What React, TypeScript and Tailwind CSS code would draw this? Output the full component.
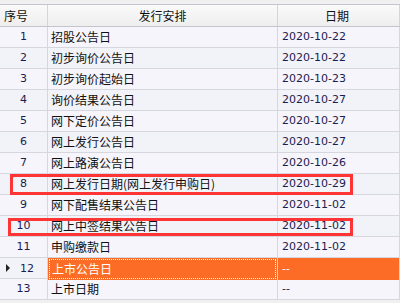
import React from "react";

const rows: [string, string][] = [
  ["招股公告日", "2020-10-22"],
  ["初步询价公告日", "2020-10-22"],
  ["初步询价起始日", "2020-10-23"],
  ["询价结果公告日", "2020-10-27"],
  ["网下定价公告日", "2020-10-27"],
  ["网上发行公告日", "2020-10-27"],
  ["网上路演公告日", "2020-10-26"],
  ["网上发行日期(网上发行申购日)", "2020-10-29"],
  ["网下配售结果公告日", "2020-11-02"],
  ["网上中签结果公告日", "2020-11-02"],
  ["申购缴款日", "2020-11-02"],
  ["上市公告日", "--"],
  ["上市日期", "--"],
];

const cjk = { fontFamily: '"Noto Sans CJK SC", "Noto Sans", sans-serif' };
const num = { fontFamily: '"DejaVu Sans", "Noto Sans CJK SC", sans-serif' };

export default function App() {
  return (
    <div className="relative w-[400px] h-[303px] bg-[#f0f0f0] overflow-hidden">
      <div className="h-[5px] bg-[#f0f0f0] border-b border-[#c4c4cc]" />
      <div className="grid grid-cols-[48px_230px_122px] h-[22px] border-b border-[#c4c4cc] bg-gradient-to-b from-[#fafafa] to-[#eeeeee] text-[12px] text-[#111]" style={cjk}>
        <div className="border-r border-[#d4d4dc] flex items-center pl-[4px]">序号</div>
        <div className="border-r border-[#d4d4dc] flex items-center justify-center">发行安排</div>
        <div className="border-r border-[#d4d4dc] flex items-center justify-center pr-[3px]">日期</div>
      </div>
      {rows.map(([name, date], i) => {
        const sel = i === 11;
        const bg = i % 2 === 0 ? "bg-[#f6f5fc]" : "bg-[#f1f3f9]";
        return (
          <div key={i} className={`grid grid-cols-[48px_230px_122px] h-[21px] border-b border-[#d6d6de] ${bg}`}>
            <div className="relative border-r border-[#d6d6de] flex items-center justify-center text-[11px] text-[#1c1c50]" style={num}>
              {sel && (
                <svg className="absolute left-[6px] top-[6px]" width="5" height="8" viewBox="0 0 5 8">
                  <path d="M0 0 L4 4 L0 8 Z" fill="#222" />
                </svg>
              )}
              <span className={sel ? "pl-[7px]" : ""}>{i + 1}</span>
            </div>
            <div className={`border-r border-[#d6d6de] flex items-center ${sel ? "bg-[#fc6c26] p-[1px]" : "pl-[3px]"}`}>
              {sel ? (
                <div className="w-full h-full border border-dotted border-white flex items-center pl-[2px] text-[12px] text-white" style={cjk}>
                  {name}
                </div>
              ) : (
                <span className="text-[12px] text-[#111]" style={cjk}>{name}</span>
              )}
            </div>
            <div className={`border-r border-[#d6d6de] flex items-center pl-[4px] text-[11px] ${sel ? "bg-[#fc6c26] text-white" : "text-[#1c1c50]"}`} style={num}>
              {date}
            </div>
          </div>
        );
      })}
      <div className="absolute left-[10px] top-[174px] w-[343px] h-[21px] border-[3px] border-[#ff3434]" />
      <div className="absolute left-[8px] top-[218px] w-[345px] h-[18px] border-[3px] border-[#ff3434]" />
    </div>
  );
}
